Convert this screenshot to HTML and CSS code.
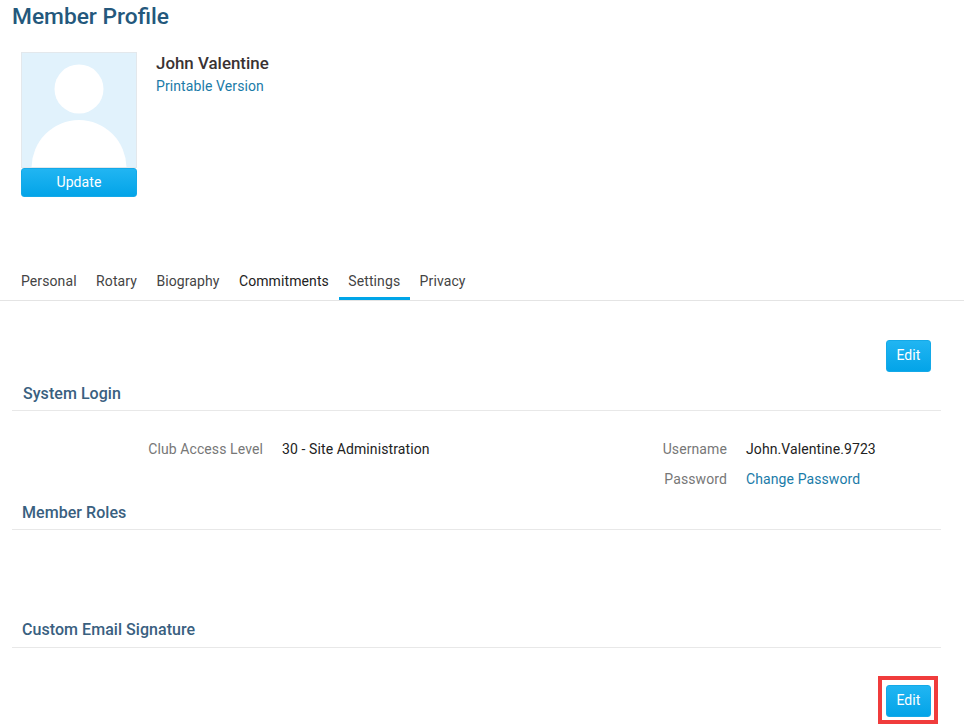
FILE: index.html
```html
<!DOCTYPE html>
<html lang="en">
<head>
<meta charset="utf-8">
<title>Member Profile</title>
<link rel="stylesheet" href="styles.css">
</head>
<body>
<div class="page">
  <h1 class="title">Member Profile</h1>
  <div class="profile">
    <div class="avatar-col">
      <div class="avatar">
        <svg class="avatar-svg" width="114" height="115" viewBox="0 0 114 115">
          <circle cx="57" cy="36" r="24.5" fill="#fff"/>
          <path d="M9.5 115 A47.5 48 0 0 1 104.500 115 Z" fill="#fff"/>
        </svg>
      </div>
      <button class="btn btn-update">Update</button>
    </div>
    <div class="info">
      <div class="name">John Valentine</div>
      <a class="link">Printable Version</a>
    </div>
  </div>
  <nav class="tabs">
    <a class="tab">Personal</a>
    <a class="tab">Rotary</a>
    <a class="tab">Biography</a>
    <a class="tab tab-dark">Commitments</a>
    <a class="tab tab-active">Settings</a>
    <a class="tab">Privacy</a>
  </nav>
  <div class="actions actions-top"><button class="btn btn-edit">Edit</button></div>
  <h2 class="section section-login">System Login</h2>
  <div class="fields">
    <div class="field-col field-left">
      <div class="field"><span class="label">Club Access Level</span><span class="value">30 - Site Administration</span></div>
    </div>
    <div class="field-col field-right">
      <div class="field"><span class="label">Username</span><span class="value">John.Valentine.9723</span></div>
      <div class="field"><span class="label">Password</span><a class="link value-link">Change Password</a></div>
    </div>
  </div>
  <h2 class="section section-roles">Member Roles</h2>
  <h2 class="section section-sign">Custom Email Signature</h2>
  <div class="actions actions-bottom"><button class="btn btn-edit">Edit</button></div>
</div>
<div class="highlight"></div>
</body>
</html>
```
FILE: styles.css
```css
html, body {
  margin: 0;
  padding: 0;
  height: 724px;
  overflow: hidden;
  background: #fff;
}
body {
  font-family: Roboto, "Liberation Sans", sans-serif;
  font-size: 14px;
  letter-spacing: 0.1px;
  color: #3b3b3b;
  position: relative;
}
.page {
  width: 941px;
  padding-left: 12px;
  box-sizing: border-box;
}
.title {
  margin: 0;
  height: 52px;
  padding-top: 3px;
  box-sizing: border-box;
  font-size: 22.75px;
  letter-spacing: 0;
  line-height: 28px;
  font-weight: 500;
  color: #24587c;
}
.profile {
  display: flex;
  padding-left: 9px;
  height: 211px;
}
.avatar-col {
  width: 116px;
}
.avatar {
  width: 116px;
  height: 116px;
  box-sizing: border-box;
  border: 1px solid #e3e8ec;
  background: #e1f2fc;
  overflow: hidden;
}
.avatar-svg {
  display: block;
}
.btn {
  display: block;
  border: 1px solid #14a9e8;
  border-radius: 3px;
  background: linear-gradient(#21b5f2, #03a4e8);
  color: #fff;
  font-family: inherit;
  font-size: 14px;
  letter-spacing: 0.1px;
  padding: 0 0 2px;
  text-align: center;
}
.btn-update {
  width: 116px;
  height: 29px;
}
.btn-edit {
  width: 45px;
  height: 32px;
}
.info {
  margin-left: 19px;
  padding-top: 1px;
}
.name {
  font-size: 16.9px;
  letter-spacing: 0;
  font-weight: 500;
  line-height: 20px;
  color: #3a3232;
  margin-bottom: 4px;
}
.link {
  color: #1a7ba8;
  font-size: 14px;
  line-height: 18px;
  display: block;
}
.tabs {
  display: flex;
  gap: 0.4px;
  height: 38px;
  border-bottom: 1px solid #e4e4e4;
  margin-left: -12px;
  padding-left: 11.5px;
  width: 964px;
  box-sizing: border-box;
}
.tab {
  padding: 9px 9.5px 0;
  line-height: 18px;
  box-sizing: border-box;
  height: 37px;
  color: #444;
}
.tab-dark {
  color: #222;
}
.tab-active {
  border-bottom: 3px solid #00a5e8;
}
.actions {
  display: flex;
  justify-content: flex-end;
  padding-right: 10px;
}
.actions-top {
  padding-top: 39px;
  height: 71px;
  box-sizing: border-box;
}
.section {
  margin: 0;
  font-size: 16px;
  letter-spacing: 0.05px;
  font-weight: 500;
  line-height: 20px;
  color: #39607f;
  border-bottom: 1px solid #e8e8e8;
  padding: 0 0 7px 10px;
}
.section-login {
  padding-left: 11px;
  padding-top: 12px;
  padding-bottom: 6px;
}
.fields {
  display: flex;
  padding-top: 29px;
  height: 85px;
  box-sizing: border-box;
}
.field-col {
  display: flex;
  flex-direction: column;
  gap: 12px;
}
.field-left {
  width: 600px;
}
.field {
  display: flex;
  line-height: 18px;
}
.field-left .label {
  width: 251px;
}
.field-right .label {
  width: 115px;
}
.label {
  text-align: right;
  color: #777;
}
.value {
  color: #222;
  margin-left: 19px;
}
.value-link {
  margin-left: 19px;
}
.section-roles {
  height: 34px;
  box-sizing: border-box;
  padding-top: 7px;
}
.section-sign {
  margin-top: 90px;
}
.actions-bottom {
  padding-top: 37px;
}
.highlight {
  position: absolute;
  left: 878px;
  top: 676px;
  width: 60px;
  height: 48px;
  box-sizing: border-box;
  border: 4px solid #f03c3c;
}
```
